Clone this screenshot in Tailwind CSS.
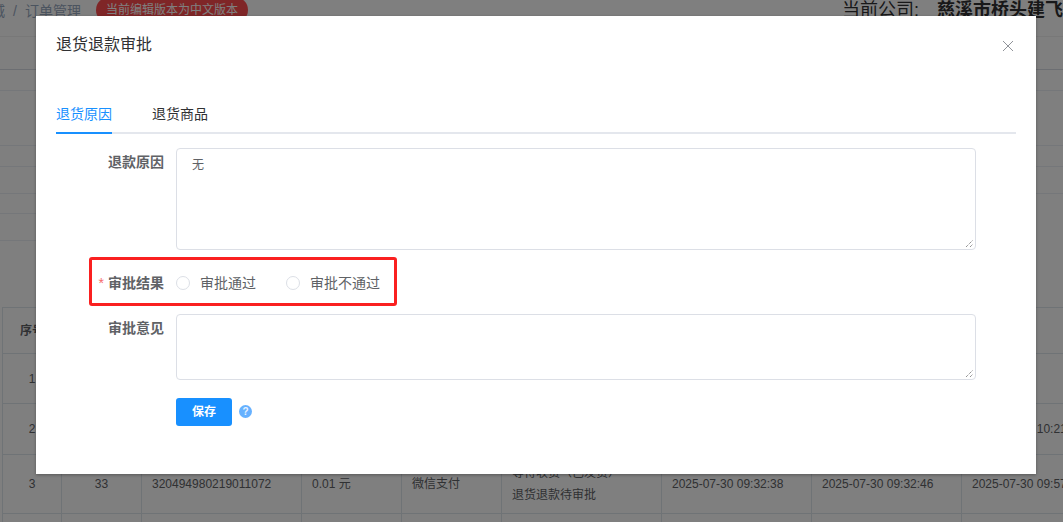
<!DOCTYPE html>
<html lang="zh-CN">
<head>
    <meta charset="UTF-8">
    <title>退货退款审批</title>
    <script src="https://cdn.jsdelivr.net/npm/@tailwindcss/browser@4"></script>
</head>
<body class="relative h-[522px] w-[1063px] overflow-hidden bg-white font-['Liberation_Sans','Noto_Sans_CJK_SC',sans-serif] text-[#606266]">

    <!-- page behind the dialog -->
    <div class="h-[522px] w-[1063px] overflow-hidden">
        <div class="flex h-[37px] items-start border-b border-[#f0f0f0] whitespace-nowrap text-[14px] leading-[18px]">
            <div class="-ml-[9px] mt-[2px] flex text-[#97a8be]">
                <span>城</span>
                <span class="mx-[8px]">/</span>
                <span>订单管理</span>
            </div>
            <span class="-mt-[3px] ml-[15px] flex h-[26px] items-center rounded-[13px] bg-[#ff4d4f] px-[10px] text-[12px] text-white">当前编辑版本为中文版本</span>
            <div class="-mt-[3px] ml-auto flex text-[18px] leading-[26px] text-[#303133]">
                <span>当前公司:</span>
                <span class="ml-[18px] font-bold">慈溪市桥头建飞</span>
            </div>
        </div>
        <div class="h-[33px] border-b border-[#d8dce5]"></div>
        <div class="h-[21px] border-b border-[#ebeef5]"></div>
        <div class="h-[55px] border-b border-[#ebeef5]"></div>
        <div class="h-[21px] border-b border-[#ebeef5]"></div>
        <div class="h-[27px] border-b border-[#ebeef5]"></div>
        <div class="h-[20px] w-[36px] border-b border-[#ebeef5]"></div>
        <div class="h-[27px] w-[36px] border-b border-[#ebeef5]"></div>

        <!-- order table -->
        <div class="ml-[2px] mt-[66px] w-[1100px] border-l border-t border-[#dfe6ec] text-[12px] leading-[22px] text-[#606266]">
            <div class="grid h-[46px] grid-cols-[59px_80px_160px_100px_100px_160px_150px_150px_142px] border-b border-[#dfe6ec] font-bold">
                <span class="flex items-center justify-center border-r border-[#dfe6ec]">序号</span>
                <span class="border-r border-[#dfe6ec]"></span><span class="border-r border-[#dfe6ec]"></span><span class="border-r border-[#dfe6ec]"></span><span class="border-r border-[#dfe6ec]"></span><span class="border-r border-[#dfe6ec]"></span><span class="border-r border-[#dfe6ec]"></span><span class="border-r border-[#dfe6ec]"></span>
            </div>
            <div class="grid h-[50px] grid-cols-[59px_80px_160px_100px_100px_160px_150px_150px_142px] border-b border-[#dfe6ec]">
                <span class="flex items-center justify-center border-r border-[#dfe6ec]">1</span>
                <span class="border-r border-[#dfe6ec]"></span><span class="border-r border-[#dfe6ec]"></span><span class="border-r border-[#dfe6ec]"></span><span class="border-r border-[#dfe6ec]"></span><span class="border-r border-[#dfe6ec]"></span><span class="border-r border-[#dfe6ec]"></span><span class="border-r border-[#dfe6ec]"></span>
            </div>
            <div class="grid h-[51px] grid-cols-[59px_80px_160px_100px_100px_160px_150px_150px_142px] border-b border-[#dfe6ec]">
                <span class="flex items-center justify-center border-r border-[#dfe6ec]">2</span>
                <span class="border-r border-[#dfe6ec]"></span><span class="border-r border-[#dfe6ec]"></span><span class="border-r border-[#dfe6ec]"></span><span class="border-r border-[#dfe6ec]"></span><span class="border-r border-[#dfe6ec]"></span><span class="border-r border-[#dfe6ec]"></span><span class="border-r border-[#dfe6ec]"></span>
                <span class="flex items-center whitespace-nowrap pl-[10px]">2025-07-30 10:21:35</span>
            </div>
            <div class="grid h-[59px] grid-cols-[59px_80px_160px_100px_100px_160px_150px_150px_142px] border-b border-[#dfe6ec]">
                <span class="flex items-center justify-center border-r border-[#dfe6ec]">3</span>
                <span class="flex items-center justify-center border-r border-[#dfe6ec]">33</span>
                <span class="flex items-center border-r border-[#dfe6ec] pl-[10px]">320494980219011072</span>
                <span class="flex items-center border-r border-[#dfe6ec] pl-[10px]">0.01 元</span>
                <span class="flex items-center border-r border-[#dfe6ec] pl-[10px]">微信支付</span>
                <span class="flex flex-col justify-center border-r border-[#dfe6ec] pl-[10px]"><span>等待收货（已发货）</span><span>退货退款待审批</span></span>
                <span class="flex items-center whitespace-nowrap border-r border-[#dfe6ec] pl-[10px]">2025-07-30 09:32:38</span>
                <span class="flex items-center whitespace-nowrap border-r border-[#dfe6ec] pl-[10px]">2025-07-30 09:32:46</span>
                <span class="flex items-center whitespace-nowrap pl-[10px]">2025-07-30 09:57:12</span>
            </div>
            <div class="grid h-[20px] grid-cols-[59px_80px_160px_100px_100px_160px_150px_150px_142px]">
                <span class="border-r border-[#dfe6ec]"></span><span class="border-r border-[#dfe6ec]"></span><span class="border-r border-[#dfe6ec]"></span><span class="border-r border-[#dfe6ec]"></span><span class="border-r border-[#dfe6ec]"></span><span class="border-r border-[#dfe6ec]"></span><span class="border-r border-[#dfe6ec]"></span><span class="border-r border-[#dfe6ec]"></span>
            </div>
        </div>
    </div>

    <!-- dialog mask -->
    <div class="absolute inset-0 bg-black/50"></div>

    <!-- dialog -->
    <div class="absolute left-[36px] top-[16px] h-[458px] w-[1000px] bg-white px-[20px] shadow-[0_1px_3px_rgba(0,0,0,0.3)]">
        <div class="flex items-start justify-between pt-[20px]">
            <span class="text-[16px] leading-[18px] text-[#303133]">退货退款审批</span>
            <svg class="mr-[2px] mt-[4px]" width="12" height="12" viewBox="0 0 12 12" fill="none" stroke="#909399" stroke-width="1"><path d="M1 1l10 10M11 1L1 11"/></svg>
        </div>

        <div class="mt-[46px] flex h-[34px] border-b-2 border-[#e4e7ed] text-[14px]">
            <div class="-mb-[2px] h-[34px] border-b-2 border-[#1890ff] pt-[4px] text-[#1890ff]">退货原因</div>
            <div class="ml-[40px] pt-[4px] text-[#303133]">退货商品</div>
        </div>

        <div class="-ml-[20px] mt-[14px] text-[14px] text-[#606266]">
            <div class="flex">
                <label class="w-[140px] pr-[12px] pt-[5px] text-right font-bold leading-[18px]">退款原因</label>
                <div class="relative h-[102px] w-[800px] rounded-[4px] border border-[#dcdfe6] px-[15px] py-[7px] text-[12px] leading-[18px]">
                    无
                    <svg class="absolute bottom-[1px] right-[1px]" width="9" height="9" viewBox="0 0 9 9" stroke="#666" stroke-width="1" stroke-dasharray="1 1"><path d="M1 8L8 1M5 8L8 5"/></svg>
                </div>
            </div>

            <div class="relative mt-[8px] flex h-[48px] items-center pt-[2px]">
                <label class="w-[140px] pr-[12px] text-right font-bold"><span class="mr-[4px] font-normal text-[#f56c6c]">*</span>审批结果</label>
                <span class="h-[14px] w-[14px] rounded-full border border-[#dcdfe6]"></span>
                <span class="ml-[10px]">审批通过</span>
                <span class="ml-[30px] h-[14px] w-[14px] rounded-full border border-[#dcdfe6]"></span>
                <span class="ml-[10px]">审批不通过</span>
                <div class="absolute left-[53px] -top-[1px] h-[49px] w-[308px] rounded-[3px] border-[3px] border-[#fa2020]"></div>
            </div>

            <div class="mt-[8px] flex">
                <label class="w-[140px] pr-[12px] pt-[5px] text-right font-bold leading-[18px]">审批意见</label>
                <div class="relative h-[66px] w-[800px] rounded-[4px] border border-[#dcdfe6]">
                    <svg class="absolute bottom-[1px] right-[1px]" width="9" height="9" viewBox="0 0 9 9" stroke="#666" stroke-width="1" stroke-dasharray="1 1"><path d="M1 8L8 1M5 8L8 5"/></svg>
                </div>
            </div>

            <div class="mt-[18px] flex items-center pl-[140px]">
                <button class="h-[28px] w-[56px] rounded-[3px] bg-[#1890ff] text-[12px] font-bold text-white">保存</button>
                <span class="mb-[2px] ml-[7px] flex h-[13px] w-[13px] items-center justify-center rounded-full bg-[#66b1ff] text-[10px] font-bold text-[#e8f3ff]">?</span>
            </div>
        </div>
    </div>
</body>
</html>
